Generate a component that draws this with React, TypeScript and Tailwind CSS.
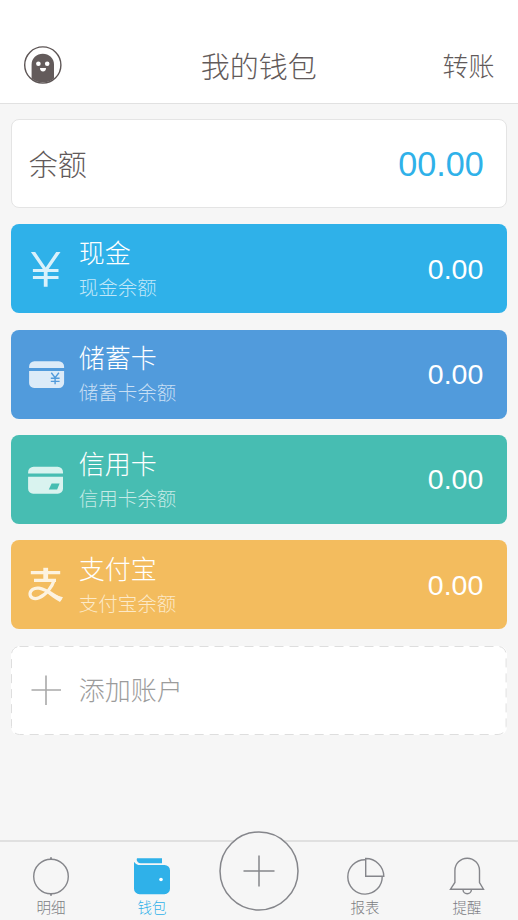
import type { ReactNode } from 'react';

const cjk = "font-['Noto_Sans_CJK_SC',sans-serif] font-light whitespace-nowrap";
const num = "font-['Liberation_Sans',sans-serif] leading-none";

function Avatar() {
  return (
    <svg width="40" height="40" viewBox="0 0 40 40" className="shrink-0">
      <circle cx="19.8" cy="20" r="18.1" fill="#fff" stroke="#5d5555" strokeWidth="1.4" />
      <path d="M8.6 33.5V19.5a11.2 10.8 0 0 1 22.4 0V33.5A18 18 0 0 1 8.6 33.5Z" fill="#635b5b" />
      <circle cx="15.4" cy="18.7" r="2.3" fill="#fff" />
      <circle cx="24.2" cy="18.7" r="2.3" fill="#fff" />
      <path d="M17 23h6a3 3.4 0 0 1-6 0Z" fill="#fff" />
    </svg>
  );
}

function YenIcon() {
  return (
    <svg width="40" height="40" viewBox="0 0 40 40" fill="none" stroke="#d9f1fb">
      <path d="M4.9 3H9.2L19.7 18.6 30.2 3H34.5L21.6 21.5V37.7H17.8V21.5Z" fill="#d9f1fb" stroke="none" />
      <path d="M6.9 21.4H32.5M6.9 28.6H32.5" strokeWidth="3" />
    </svg>
  );
}

function SavingsIcon() {
  return (
    <svg width="40" height="40" viewBox="0 0 40 40">
      <path d="M3.1 14V12.5a5.3 5.3 0 0 1 5.3-5.3h24.4A5.3 5.3 0 0 1 38.1 12.5v1.5ZM3.1 17h35v11.7A5.2 5.2 0 0 1 32.9 33.9H8.1A5 5 0 0 1 3.1 28.9Z" fill="#dcebf8" />
      <path d="M25.3 18.7 29.1 23.6 32.9 18.7M29.1 23.6V30.2M24.8 24.2h8.8M24.8 27.4h8.8" fill="none" stroke="#519bdc" strokeWidth="1.4" />
    </svg>
  );
}

function CreditIcon() {
  return (
    <svg width="40" height="40" viewBox="0 0 40 40">
      <path d="M2.1 13.6V12.2a5.5 5.5 0 0 1 5.5-5.5h24A5.4 5.4 0 0 1 37 12.2v1.4ZM2.1 16.7H37v12A5.2 5.2 0 0 1 31.8 33.8H7.1A5 5 0 0 1 2.1 28.8Z" fill="#d9f3ef" />
      <path d="M25.6 23.6h8l-2.5 6h-8.3Z" fill="#47bdb2" />
    </svg>
  );
}

function AlipayIcon() {
  return (
    <svg width="40" height="40" viewBox="0 0 40 40" fill="none" stroke="#fdf3e0">
      <path d="M4.8 7.6H34.2M8 15.4H30" strokeWidth="3.2" />
      <path d="M19.7 2.8V15" strokeWidth="4.8" />
      <path d="M28.2 15C26.5 21 20.5 29.5 13 32.8 8 35 3.9 32.5 4 28.8 4.2 25.2 8 22.5 13 23.2 20 24.2 26.5 29.5 35.5 34.5" strokeWidth="3.2" />
      <path d="M21.5 25.6C26 28.4 31 31.2 37 32.2L34 37C28.5 34 24.5 30.8 21 28Z" fill="#fdf3e0" stroke="none" />
    </svg>
  );
}

interface Account {
  name: string;
  color: string;
  sub: string;
  icon: ReactNode;
}

const accounts: Account[] = [
  { name: '现金', color: 'bg-[#2fb1e9]', sub: 'text-[#c0e7f8]', icon: <YenIcon /> },
  { name: '储蓄卡', color: 'bg-[#519bdc]', sub: 'text-[#c8dff4]', icon: <SavingsIcon /> },
  { name: '信用卡', color: 'bg-[#47bdb2]', sub: 'text-[#c5eae6]', icon: <CreditIcon /> },
  { name: '支付宝', color: 'bg-[#f3bc5e]', sub: 'text-[#fce9c8]', icon: <AlipayIcon /> },
];

function AccountCard({ name, color, sub, icon }: Account) {
  return (
    <section className={`flex h-[89px] items-center rounded-lg pr-[23.5px] pl-[14.5px] ${color}`}>
      <div className="w-[53px] shrink-0">{icon}</div>
      <div className={`grow ${cjk}`}>
        <h2 className="text-[26px] leading-[34px] font-light text-white">{name}</h2>
        <p className={`mt-[2px] mb-px text-[19.5px] leading-[31px] ${sub}`}>{name}余额</p>
      </div>
      <span className={`text-[28.5px] text-white ${num}`}>0.00</span>
    </section>
  );
}

function Tab({ label, active = false, children }: { label: string; active?: boolean; children: ReactNode }) {
  return (
    <div className="flex w-[60px] flex-col items-center pt-[13px]">
      <svg width="44" height="44" viewBox="0 0 44 44" fill="none" stroke="#85868b" strokeWidth="1.4">
        {children}
      </svg>
      <span className={`-mt-px text-[14.5px] leading-[18px] ${cjk} ${active ? 'text-[#2fb1e9]' : 'text-[#7c7d82]'}`}>{label}</span>
    </div>
  );
}

export default function App() {
  return (
    <div className="flex h-[920px] w-[518px] flex-col overflow-hidden bg-[#f6f6f6]">
      <header className={`grid h-[104px] shrink-0 grid-cols-3 items-center border-b border-[#e1e1e1] bg-white pt-[27px] pr-[23.5px] pl-[23px] text-[#625a5a] ${cjk}`}>
        <Avatar />
        <h1 className="pb-px text-center text-[29px] leading-[42px] font-light">我的钱包</h1>
        <span className="pb-px text-right text-[26px] leading-[40px]">转账</span>
      </header>

      <main className="flex grow flex-col gap-[16.3px] pt-[15.2px] pr-[11.2px] pl-[11.2px]">
        <section className="flex h-[89px] items-center justify-between rounded-lg border border-[#e4e4e4] bg-white pr-[22px] pl-[16.5px]">
          <span className={`pb-[2px] text-[29px] leading-[42px] text-[#625a5a] ${cjk}`}>余额</span>
          <span className={`text-[34.2px] text-[#2fb1e9] ${num}`}>00.00</span>
        </section>
        {accounts.map((account) => (
          <AccountCard key={account.name} {...account} />
        ))}
        <section className="relative flex h-[89px] items-center rounded-lg bg-white pl-[14.5px]">
          <svg className="absolute inset-0 size-full" fill="none">
            <rect x="0.5" y="0.5" width="494.6" height="88" rx="8" stroke="#dedede" strokeDasharray="9 6" />
          </svg>
          <svg width="40" height="40" viewBox="0 0 40 40" className="mr-[13px] shrink-0" stroke="#a9a9a9" strokeWidth="1.6">
            <path d="M5.5 20H35M20 5.5V35" />
          </svg>
          <span className={`pb-[2px] text-[26px] leading-[38px] text-[#9c9c9c] ${cjk}`}>添加账户</span>
        </section>
      </main>

      <nav className="flex h-[80px] shrink-0 items-start justify-between border-t-2 border-[#e0e0e0] px-[21px]">
        <div className="flex gap-[41px]">
          <Tab label="明细">
            <circle cx="22" cy="21.5" r="17.3" />
            <path d="M22 2.3v2.5M22 38.2v2.5" strokeWidth="1.8" />
          </Tab>
          <Tab label="钱包" active>
            <g fill="#2fb1e9" stroke="none">
              <path d="M7 3.2H32V8.2H10.8C8.3 8 6.6 6.2 6.7 4.4ZM4 6.7C5.5 9.2 7.5 10 10 10H34.5A5.5 5.5 0 0 1 40 15.5V33.7A5.5 5.5 0 0 1 34.5 39.2H9.5A5.5 5.5 0 0 1 4 33.7Z" />
              <circle cx="31" cy="24.5" r="1.8" fill="#fff" />
            </g>
          </Tab>
        </div>
        <svg width="82" height="82" viewBox="0 0 82 82" className="-mt-[12px] shrink-0" fill="none" stroke="#85868b" strokeWidth="1.5">
          <circle cx="41" cy="41" r="39" fill="#f6f6f6" />
          <path d="M25.5 41h31M41 25.5v31" />
        </svg>
        <div className="flex gap-[42px]">
          <Tab label="报表">
            <path d="M22 4.7A17.2 17.2 0 1 0 39.2 21.5" />
            <path d="M22.7 3.5V21.3H40.8A18 18 0 0 0 22.7 3.5Z" />
          </Tab>
          <Tab label="提醒">
            <path d="M5.5 34.2H38.5L34.5 27.5V15.5a12.3 12.3 0 0 0-24.6 0V27.5ZM18 34.5a4.2 4.2 0 0 0 8.4 0" />
          </Tab>
        </div>
      </nav>
    </div>
  );
}
